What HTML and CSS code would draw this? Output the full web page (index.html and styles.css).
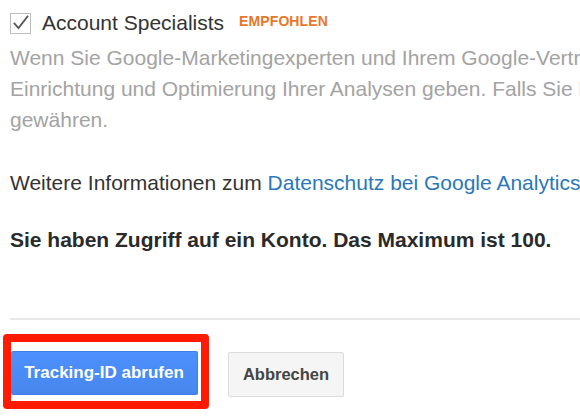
FILE: index.html
```html
<!DOCTYPE html>
<html lang="de">
<head>
<meta charset="utf-8">
<link rel="stylesheet" href="styles.css">
</head>
<body>
<div class="page">
  <div class="option">
    <svg class="checkbox" width="22" height="21" viewBox="0 0 22 21">
      <rect x="0.5" y="0.5" width="20" height="20" fill="#fff" stroke="#bdbdbd"/>
      <path d="M4.5 10.5 L8.5 15 L17.5 3.5" fill="none" stroke="#555" stroke-width="1.8" stroke-linecap="square"/>
    </svg>
    <span class="option-label">Account Specialists</span>
    <span class="badge">EMPFOHLEN</span>
  </div>
  <div class="desc">
    <div class="line">Wenn Sie Google-Marketingexperten und Ihrem Google-Vertriebsteam Zugriff gewähren, können sie Ihnen Tipps zur</div>
    <div class="line">Einrichtung und Optimierung Ihrer Analysen geben. Falls Sie keine Vertriebsmitarbeiter haben, sollten Sie diesen Zugriff</div>
    <div class="line">gewähren.</div>
  </div>
  <p class="info">Weitere Informationen zum <a class="link" href="#">Datenschutz bei Google Analytics</a></p>
  <p class="limit">Sie haben Zugriff auf ein Konto. Das Maximum ist 100.</p>
  <div class="divider"></div>
  <div class="actions">
    <div class="highlight">
      <button class="btn btn-primary">Tracking-ID abrufen</button>
    </div>
    <button class="btn btn-secondary">Abbrechen</button>
  </div>
</div>
</body>
</html>
```
FILE: styles.css
```css
html, body {
  margin: 0;
  padding: 0;
  background: #fff;
  overflow: hidden;
}
body {
  width: 580px;
  height: 419px;
  font-family: "Liberation Sans", Arial, sans-serif;
  color: #333;
}
.page {
  padding: 12px 0 0 10px;
  overflow: hidden;
}
.option {
  display: flex;
  align-items: center;
  height: 22px;
}
.checkbox {
  flex: none;
  display: block;
}
.option-label {
  font-size: 21px;
  color: #333;
  margin-left: 10px;
}
.badge {
  font-size: 14px;
  font-weight: bold;
  color: #e8762b;
  margin-left: 15px;
  margin-bottom: 4px;
  letter-spacing: 0.1px;
}
.desc {
  margin-top: 8px;
  font-size: 21px;
  line-height: 31px;
  color: #a3a3a3;
  overflow: hidden;
}
.line {
  white-space: nowrap;
}
.info {
  margin: 36px 0 0;
  font-size: 21px;
  line-height: 24px;
  white-space: nowrap;
  color: #333;
}
.link {
  color: #2a78b8;
  text-decoration: none;
}
.limit {
  margin: 33px 0 0;
  font-size: 21px;
  line-height: 24px;
  font-weight: bold;
  color: #2a2a2a;
  white-space: nowrap;
}
.divider {
  margin-top: 66px;
  height: 2px;
  background: #e8e8e8;
}
.actions {
  margin-top: 14px;
  margin-left: -7px;
  display: flex;
  align-items: flex-start;
}
.highlight {
  border: 8px solid #ff1a00;
  border-radius: 4px;
  padding: 9px 3px 6px 0;
  background: #fff;
}
.btn {
  font-family: "Liberation Sans", Arial, sans-serif;
  font-size: 17px;
  font-weight: bold;
  border-radius: 2px;
  cursor: pointer;
  display: block;
  padding: 0;
}
.btn-primary {
  width: 187px;
  height: 44px;
  color: #fff;
  background: linear-gradient(#4d90fe, #4787ed);
  border: 1px solid #3f7fe6;
  border-left: none;
}
.btn-secondary {
  margin-left: 19px;
  margin-top: 18px;
  width: 116px;
  height: 45px;
  font-size: 16.5px;
  color: #444;
  background: #f5f5f5;
  border: 1px solid #dcdcdc;
}
```
